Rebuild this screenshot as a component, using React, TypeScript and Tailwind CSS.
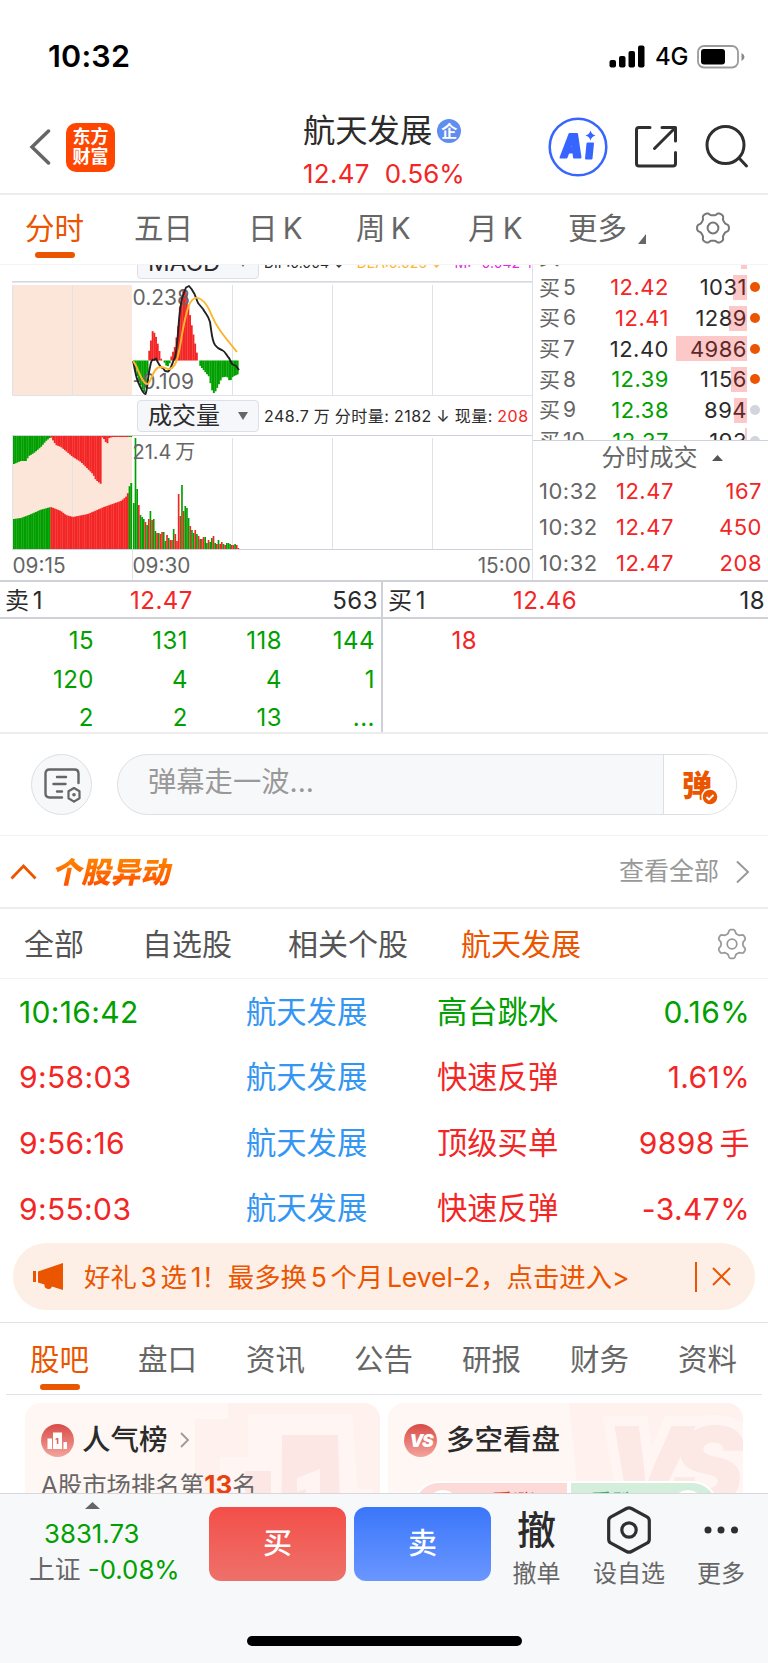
import type { ReactNode } from "react";

const RED = "#f32525";
const GREEN = "#00a000";

const bids = [
  { label: "买4", price: "12.43", size: "612", color: "text-[#f32525]", bar: 6, dot: "bg-[#eb5500]" },
  { label: "买5", price: "12.42", size: "1031", color: "text-[#f32525]", bar: 14, dot: "bg-[#eb5500]" },
  { label: "买6", price: "12.41", size: "1289", color: "text-[#f32525]", bar: 18, dot: "bg-[#eb5500]" },
  { label: "买7", price: "12.40", size: "4986", color: "text-[#2b2b2b]", bar: 71, dot: "bg-[#eb5500]" },
  { label: "买8", price: "12.39", size: "1156", color: "text-[#00a000]", bar: 16, dot: "bg-[#eb5500]" },
  { label: "买9", price: "12.38", size: "894", color: "text-[#00a000]", bar: 13, dot: "bg-[#d3d5dc]" },
  { label: "买10", price: "12.37", size: "193", color: "text-[#00a000]", bar: 2, dot: "bg-[#d3d5dc]" },
];

const deals = ["167", "450", "208"];

const sellQueue = [
  ["15", "131", "118", "144"],
  ["120", "4", "4", "1"],
  ["2", "2", "13", "..."],
];

const moves = [
  { time: "10:16:42", type: "高台跳水", value: "0.16%", color: "text-[#00a000]" },
  { time: "9:58:03", type: "快速反弹", value: "1.61%", color: "text-[#f32525]" },
  { time: "9:56:16", type: "顶级买单", value: "9898 手", color: "text-[#f32525]" },
  { time: "9:55:03", type: "快速反弹", value: "-3.47%", color: "text-[#f32525]" },
];

const infoTabs = ["股吧", "盘口", "资讯", "公告", "研报", "财务", "资料"];

// height and direction of each one-minute volume bar
const volume =
  "46g 111g 60g 44r 34g 32g 30g 27r 24g 30r 38g 29r 30g 18g 16r 16g 15r 17r 17g 8g 14r 11g 9r 9r 20g 15r 8r 55r 33r 64g 38r 43g 41g 31g 23r 19g 16g 19r 15g 13r 10g 10r 12r 12g 6g 9r 7g 11g 13r 6g 5r 9g 5r 7r 5g 4r 6g 6g 5g 4r 4r 5g 4r 1r".split(
    " "
  );

// [x, value] knots, sampled in between
const auctionBottom = [[13, 30], [20, 31], [28, 34], [35, 37], [39, 39], [50, 42], [60, 38], [65, 34], [72, 32], [87, 35], [103, 42], [120, 48], [125, 52], [128, 58], [129, 66], [132, 66]];
const auctionTop = [[13, 28], [20, 25], [25, 25], [28, 20], [33, 17], [40, 11], [45, 5], [50, 1], [55, 9], [60, 11], [65, 15], [72, 21], [80, 26], [87, 33], [92, 38], [95, 44], [100, 48], [101, 1], [104, 4], [106, 9], [108, 2], [112, 1], [132, 1]];
const macdBars = [[133, -2], [137, -18], [143, -32], [146, -24], [147.5, 5], [150, 20], [152, 31], [155, 24], [158, 12], [160, 2], [163, -1], [165, -5], [168, -6], [170, 3], [174, 14], [177, 32], [179, 55], [182, 70], [185, 72], [188, 52], [191, 34], [194, 18], [197, 2], [199, -5], [203, -10], [208, -16], [210, -25], [212, -33], [214, -32], [217, -26], [221, -17], [226, -16], [229, -21], [232, -16], [239, -13]];

function sample(points: number[][], x: number) {
  for (let i = 1; i < points.length; i++) {
    const [x0, y0] = points[i - 1];
    const [x1, y1] = points[i];
    if (x <= x1) return y0 + ((y1 - y0) * (x - x0)) / (x1 - x0);
  }
  return points[points.length - 1][1];
}

function steps(from: number, to: number, step: number) {
  const out: number[] = [];
  for (let x = from; x < to; x += step) out.push(x);
  return out;
}

function gearPath(r: number, amp: number, phase: number) {
  let d = "";
  for (let i = 0; i < 120; i++) {
    const t = (i / 120) * Math.PI * 2;
    const wave = Math.tanh(1.8 * Math.cos(6 * (t + phase)));
    const rr = r + amp * wave;
    d += `${i ? "L" : "M"}${(18 + rr * Math.cos(t)).toFixed(2)} ${(18 + rr * Math.sin(t)).toFixed(2)}`;
  }
  return d + "Z";
}

function Gear({ className, amp, phase, r }: { className: string; amp: number; phase: number; r: number }) {
  return (
    <svg viewBox="0 0 36 36" className={className} fill="none" stroke="currentColor" strokeWidth="2" strokeLinejoin="round">
      <path d={gearPath(r, amp, phase)} />
      <circle cx="18" cy="18" r="5.400" />
    </svg>
  );
}

function StatusBar() {
  return (
    <div className="flex h-[100px] items-center justify-between pt-[13px] pr-[23px] pl-[48px] text-black">
      <span className="text-[30.500px] font-semibold tracking-[0.200px]">10:32</span>
      <div className="flex items-center">
        <svg className="h-[23px] w-[37px]" viewBox="0 0 37 23">
          <rect x="0.500" y="15" width="6.500" height="7.500" rx="2" />
          <rect x="10" y="11" width="6.500" height="11.500" rx="2" />
          <rect x="19.500" y="6" width="6.500" height="16.500" rx="2" />
          <rect x="29" y="0.500" width="6.500" height="22" rx="2" />
        </svg>
        <span className="ml-[9px] w-[42px] pt-px text-[24px] font-medium tracking-[-0.300px]">4G</span>
        <svg className="h-6 w-[48px]" viewBox="0 0 48 24">
          <rect x="1" y="1" width="40" height="21.500" rx="6" fill="none" stroke="#9b9b9b" strokeWidth="1.800" />
          <rect x="4" y="4" width="24" height="15.500" rx="3" />
          <path d="M44.500 8v8q3-1.500 3-4t-3-4z" fill="#8a8a8a" />
        </svg>
      </div>
    </div>
  );
}

function Header() {
  return (
    <header className="flex h-[95px] border-b-2 border-[#ececec] pt-[12px]">
      <div className="flex w-[303px] items-center pb-[11px] pl-[29px]">
        <svg className="h-9 w-[22px] text-[#666]" viewBox="0 0 22 36" fill="none" stroke="currentColor" strokeWidth="3.500" strokeLinecap="round">
          <path d="M19.500 2 3 18l16.500 16" />
        </svg>
        <div className="ml-[15px] flex size-[49px] flex-col items-center justify-center rounded-[10px] bg-[#ff4600] text-[18px] leading-[20px] font-bold text-white">
          <span>东方</span>
          <span>财富</span>
        </div>
      </div>
      <div className="flex w-[244px] flex-col">
        <div className="flex h-[38px] items-center text-[32.300px] text-[#2b2b2b]">
          <span className="whitespace-nowrap">航天发展</span>
          <span className="ml-[5px] flex size-6 items-center justify-center rounded-full bg-[#5f8df0] text-[16px] font-bold text-white">企</span>
        </div>
        <div className="flex h-[35px] items-center gap-[15px] pt-[12px] text-[25.900px] text-[#f32525]">
          <span className="tracking-[0.300px]">12.47</span>
          <span>0.56%</span>
        </div>
      </div>
      <div className="flex items-center pb-[11px]">
        <svg className="size-[62px] text-[#3665ff]" viewBox="0 0 62 62" fill="currentColor" stroke="currentColor">
          <circle cx="31" cy="31" r="28.300" fill="none" strokeWidth="2.500" />
          <path fillRule="evenodd" strokeWidth="2" strokeLinejoin="round" d="M22.500 18h7.500l3.500 23.500h-6.500l-.500-5h-5L19.500 41.500h-6zM25.500 25l-2.700 6.500h3.300z" />
          <path strokeWidth="2" strokeLinejoin="round" d="M40.500 27.500h5.500l-1.500 15h-5.500z" />
          <path stroke="none" d="M43.500 14.500q1 4 5 5-4 1-5 5-1-4-5-5 4-1 5-5z" />
        </svg>
        <svg className="ml-[25px] size-[44px] text-[#2f2f2f]" viewBox="0 0 44 44" fill="none" stroke="currentColor" strokeWidth="3" strokeLinecap="round" strokeLinejoin="round">
          <path d="M16 2.500H5q-2.500 0-2.500 2.500v33.500q0 2.500 2.500 2.500h34q2.500 0 2.500-2.500V27.500" />
          <path d="M28 2.500h13.500V16M41 3 20.500 23.500" />
        </svg>
        <svg className="ml-[26px] size-[46px] text-[#2f2f2f]" viewBox="0 0 46 46" fill="none" stroke="currentColor" strokeWidth="3" strokeLinecap="round">
          <circle cx="21.500" cy="21" r="18.500" />
          <path d="m35 34 7.500 8" />
        </svg>
      </div>
    </header>
  );
}

function PeriodTabs() {
  return (
    <nav className="flex h-[70px] shrink-0 border-b border-[#f3f3f3] pt-[13px] text-[29.500px] leading-[40px] whitespace-nowrap text-[#666] [word-spacing:-3px]">
      <div className="ml-[25px] flex w-[109px] flex-col text-[#eb5500]">
        分时
        <span className="mt-1 ml-[10px] h-[6px] w-10 rounded-full bg-[#eb5500]" />
      </div>
      <span className="w-[114px]">五日</span>
      <span className="w-[108px]">日 K</span>
      <span className="w-[112px]">周 K</span>
      <span className="w-[100px]">月 K</span>
      <span className="w-[59px]">更多</span>
      <svg className="mt-[26px] ml-[10px] size-[10px]" viewBox="0 0 10 10" fill="#666">
        <path d="M9 0v10H1z" />
      </svg>
      <Gear className="mt-[2px] ml-[48px] size-9 text-[#777]" r={14.300} amp={1.700} phase={0} />
    </nav>
  );
}

function Picker({ children }: { children: ReactNode }) {
  return (
    <div className="ml-[137px] flex h-8 w-[122px] shrink-0 items-center justify-between rounded-[4px] border border-[#dcdfe6] bg-[#f6f7fa] pr-[10px] pl-[10px] text-[24px] text-[#2b2b2b]">
      <span>{children}</span>
      <svg className="h-2 w-[10px]" viewBox="0 0 10 8" fill="#666">
        <path d="M0 0h10L5 8z" />
      </svg>
    </div>
  );
}

function Charts() {
  return (
    <div className="flex w-[532px] shrink-0 flex-col overflow-hidden">
      <div className="flex h-[14px] shrink-0 items-end overflow-hidden whitespace-nowrap">
        <Picker>MACD</Picker>
        <div className="ml-[5px] flex h-[33px] items-center gap-[12px] text-[14px]">
          <span className="text-[#2b2b2b]">DIF:0.004 ↓</span>
          <span className="text-[#fdb52c]">DEA:0.025 ↓</span>
          <span className="text-[#e02be0]">M: -0.042 ↑</span>
        </div>
      </div>
      <svg className="h-[118px] w-[533px] shrink-0" viewBox="0 279 533 118">
        <rect x="12" y="281" width="521" height="1.600" fill="#d5d8df" />
        <rect x="13" y="285" width="119" height="110" fill="#fce6da" />
        <path d="M12.500 285V395.500H533M72.500 285v110M232.500 285v110M332.500 285v110M432.500 285v110" fill="none" stroke="#dfe2ea" />
        {steps(133, 238, 1.7).map((x) => {
          const v = sample(macdBars, x);
          return <rect key={x} x={x} y={v > 0 ? 360.5 - v : 360.5} width="1.900" height={Math.abs(v)} fill={v > 0 ? RED : GREEN} />;
        })}
        <text x="132.500" y="304.500" fontSize="21" fill="#666">0.238</text>
        <text x="132.500" y="388.500" fontSize="21" fill="#666">-0.109</text>
        <path d="M133 361c2 8 3 18 6 23 2 4 4 10 6.500 10 2-4 2-16 4.500-27 1-6 2-8 4-7l2-1.500 2 4c2 3 3 6 5 5.500l2 3 3 .5c3-1 4-9 7-14 4-18 3-49 8-62l3-8 3-1.500 2.500 3 3 5 3.500 9 5 6c4 7 5 6 7 13 2 13 2 19 5 23 3 4 4 4 7 5 4 2 4 5 7 8l3 6 4 2 3 4" fill="none" stroke="#222" strokeWidth="1.900" strokeLinejoin="round" />
        <path d="M133 361c5 5 8 22 14 23 4 1 5-16 13-17 6 0 7 3 10 2 8-3 9-18 13-40 4-20 6-28 12-31 7-1 13 8 17 18 5 12 12 20 25 36" fill="none" stroke="#fdb52c" strokeWidth="1.900" />
      </svg>
      <div className="flex h-[37px] shrink-0 items-center whitespace-nowrap">
        <Picker>成交量</Picker>
        <div className="ml-[5px] pt-px text-[16px] tracking-[0.500px] text-[#2b2b2b] [word-spacing:-0.500px]">
          248.7 万 分时量: 2182 ↓ 现量: <span className="text-[#f32525]">208</span>
        </div>
      </div>
      <svg className="h-[146px] w-[533px] shrink-0" viewBox="0 434 533 146">
        <rect x="13" y="437" width="119" height="112" fill="#fce6da" />
        <path d="M72.500 438v111M232.500 438v111M332.500 438v111M432.500 438v111M132.500 549v31M12.500 435v114" stroke="#dfe2ea" />
        {steps(13, 130.5, 1.7).map((x) => {
          const low = sample(auctionBottom, x);
          const high = sample(auctionTop, x);
          return (
            <g key={x} fill={x < 49.5 || x > 128.5 ? GREEN : RED}>
              <rect x={x} y={549 - low} width="1.900" height={low} />
              <rect x={x} y="436" width="1.900" height={high} />
            </g>
          );
        })}
        <path d="M12 435.500h521M12 549.500h521" stroke="#cfd2da" />
        {volume.map((v, i) => {
          const h = parseInt(v);
          return <rect key={i} x={133 + i * 1.66} y={549 - h} width="1.660" height={h} fill={v.endsWith("g") ? GREEN : RED} />;
        })}
        <g fontSize="20.800" fill="#666">
          <text x="132.500" y="458.500" fontSize="20" wordSpacing="-2">21.4 万</text>
          <text x="12.500" y="573">09:15</text>
          <text x="132.500" y="573">09:30</text>
          <text x="531" y="573" textAnchor="end">15:00</text>
        </g>
      </svg>
    </div>
  );
}

function OrderBook() {
  return (
    <div className="flex flex-1 flex-col overflow-hidden border-l border-[#dfe2ea] text-[22px] tracking-[0.500px] text-[#666]">
      <div className="flex h-[176px] shrink-0 flex-col justify-end overflow-hidden border-b border-[#cfd2da]">
        <div className="-mb-4 flex flex-col">
          {bids.map((b) => (
            <div key={b.label} className="relative flex h-[30.700px] shrink-0 items-center pl-[6px] whitespace-nowrap">
              <span className="w-[50px] text-[21px] tracking-normal [word-spacing:-3px]">{b.label.replace("买", "买 ")}</span>
              <span className={`w-[80px] text-right ${b.color}`}>{b.price}</span>
              <span className="w-[78px] text-right text-[#2b2b2b]">{b.size}</span>
              <span className={`ml-[3px] size-[10px] rounded-full ${b.dot}`} />
              <span className="absolute top-[3px] right-[21px] h-[25px] bg-[#f32525]/25" style={{ width: b.bar }} />
            </div>
          ))}
        </div>
      </div>
      <div className="flex h-8 shrink-0 items-center justify-center gap-[14px] pt-px pl-[23px] text-[24px] tracking-normal">
        分时成交
        <svg className="h-[6px] w-[11px]" viewBox="0 0 11 6" fill="#555">
          <path d="M0 6h11L5.500 0z" />
        </svg>
      </div>
      {deals.map((d) => (
        <div key={d} className="flex h-9 shrink-0 items-center pr-[6px] pl-[6px]">
          <span className="w-[77px]">10:32</span>
          <span className="text-[#f32525]">12.47</span>
          <span className="ml-auto text-[#f32525]">{d}</span>
        </div>
      ))}
    </div>
  );
}

function Level({ label, price, size }: { label: string; price: string; size: string }) {
  return (
    <div className="flex h-[37px] items-center border-b-2 border-[#d0d0d8] pt-[3px] pr-[3px] pl-[5px] text-[24px] tracking-[0.500px] whitespace-nowrap text-[#2b2b2b]">
      <span className="w-[125px] tracking-normal [word-spacing:-3px]">{label}</span>
      <span className="text-[#f32525]">{price}</span>
      <span className="ml-auto">{size}</span>
    </div>
  );
}

function QueueBoard() {
  return (
    <section className="flex h-[154px] shrink-0 border-t-2 border-b-2 border-t-[#d0d0d8] border-b-[#ececec]">
      <div className="w-[383px] border-r-2 border-[#d0d0d8]">
        <Level label="卖 1" price="12.47" size="563" />
        <div className="grid grid-cols-[94px_94px_94px_93px] pt-[3px] text-right text-[24px] leading-[38.500px] tracking-[0.500px] text-[#00a000]">
          {sellQueue.flat().map((n, i) => (
            <span key={i}>{n}</span>
          ))}
        </div>
      </div>
      <div className="flex-1">
        <Level label="买 1" price="12.46" size="18" />
        <div className="w-[94px] pt-[3px] text-right text-[24px] leading-[38.500px] tracking-[0.500px] text-[#f32525]">18</div>
      </div>
    </section>
  );
}

function DanmuBar() {
  return (
    <div className="flex h-[102px] shrink-0 items-center border-b border-[#f2f2f2] pl-[31px]">
      <div className="flex size-[61px] items-center justify-center rounded-full border border-[#dcdfe5] bg-[#f7f8fa] text-[#666]">
        <svg className="size-[38px]" viewBox="0 0 38 38" fill="none" stroke="currentColor" strokeWidth="2.400" strokeLinecap="round">
          <path d="M19 31.500H6.500q-4 0-4-4v-20q0-4 4-4h25q4 0 4 4V17" />
          <path d="M14 11h9M10.500 18h12M14 25.500h5" />
          <path d="m31 22 5.500 3.300v7L31 35.600l-5.500-3.300v-7z" strokeWidth="2.200" strokeLinejoin="round" />
          <circle cx="31" cy="28.800" r="1.800" fill="currentColor" stroke="none" />
        </svg>
      </div>
      <div className="ml-[25px] flex h-[61px] w-[620px] overflow-hidden rounded-full border border-[#dcdfe5] bg-[#f7f8fa]">
        <span className="flex-1 pt-[7px] pl-[30px] text-[28.300px] leading-[40px] text-[#999]">弹幕走一波...</span>
        <div className="flex w-[73px] items-center border-l border-[#dcdfe5] bg-white pl-[18px]">
          <div className="relative text-[30px] leading-[40px] font-black text-[#eb5500]">
            弹
            <svg className="absolute right-[-7px] bottom-[-1px] size-[18px]" viewBox="0 0 18 18">
              <circle cx="9" cy="9" r="8" fill="#eb5500" stroke="#fff" strokeWidth="1.500" />
              <path d="m5.500 9 2.500 2.500 4.500-4.500" fill="none" stroke="#fff" strokeWidth="1.800" />
            </svg>
          </div>
        </div>
      </div>
    </div>
  );
}

function StockMoves() {
  return (
    <section className="shrink-0">
      <div className="flex h-[73px] items-center border-b-2 border-[#ececec] pr-[18px] pl-[10px]">
        <svg className="h-[17px] w-[27px]" viewBox="0 0 27 17" fill="none" stroke="#eb5500" strokeWidth="2.800">
          <path d="M1.500 15.500 13.500 3l12 12.500" />
        </svg>
        <h2 className="ml-[17px] -skew-x-12 bg-linear-to-b from-[#ff8c00] to-[#ff4300] bg-clip-text text-[29.500px] leading-[38px] font-black text-transparent">个股异动</h2>
        <span className="ml-auto text-[25px] text-[#999]">查看全部</span>
        <svg className="ml-4 h-6 w-[15px]" viewBox="0 0 15 24" fill="none" stroke="#999" strokeWidth="2">
          <path d="m2 1.500 11 10.500L2 22.500" />
        </svg>
      </div>
      <div className="flex h-[70px] items-center border-b border-[#f2f2f2] text-[30px] whitespace-nowrap text-[#555]">
        <span className="w-[142px] pl-6">全部</span>
        <span className="w-[146px]">自选股</span>
        <span className="w-[173px]">相关个股</span>
        <span className="w-[255px] text-[#eb5500]">航天发展</span>
        <Gear className="size-8 text-[#999]" r={14.300} amp={2.100} phase={Math.PI / 6} />
      </div>
      <div className="flex flex-col">
        {moves.map((m) => (
          <div key={m.time} className={`flex h-[65.600px] items-center pr-[18px] pl-[19px] text-[30px] whitespace-nowrap [word-spacing:-4px] ${m.color}`}>
            <span className="w-[227px] tracking-[0.350px]">{m.time}</span>
            <span className="w-[191px] text-[30.300px] text-[#3396f3]">航天发展</span>
            <span className="text-[30.300px]">{m.type}</span>
            <span className="ml-auto tracking-[0.400px]">{m.value}</span>
          </div>
        ))}
      </div>
    </section>
  );
}

function PromoBanner() {
  return (
    <div className="mx-[13px] mt-[2px] flex h-[67px] shrink-0 items-center rounded-full bg-[#fdeee6] pr-6 pl-[19px] text-[26.400px] whitespace-nowrap text-[#eb5500]">
      <svg className="h-[29px] w-[33px]" viewBox="0 0 33 29" fill="currentColor">
        <path d="M1 9h3v11H1zM6 9.500 31 1v27l-11-3.500q-1 3-4 2.500-4-.5-3.500-4.500L6 20.500z" />
      </svg>
      <span className="ml-[19px] [word-spacing:-3.700px]">好礼 3 选 1！最多换 5 个月 Level-2，点击进入&gt;</span>
      <span className="ml-auto h-[30px] w-[2px] bg-[#eb5500]" />
      <svg className="ml-[15px] size-[19px]" viewBox="0 0 19 19" fill="none" stroke="currentColor" strokeWidth="2">
        <path d="m1 1 17 17M18 1 1 18" />
      </svg>
    </div>
  );
}

function InfoTabs() {
  return (
    <nav className="mt-[12px] shrink-0 border-t border-[#dfe1e8] px-[6px]">
      <div className="flex h-[72px] border-b border-[#dfe1e8] pt-[16px] pl-[24px] text-[29.500px] leading-[40px] text-[#666]">
        {infoTabs.map((t, i) => (
          <div key={t} className={`w-[108px] shrink-0 ${i === 0 ? "text-[#eb5500]" : ""}`}>
            {t}
            {i === 0 && <div className="mt-[5px] ml-[10px] h-[6px] w-10 rounded-full bg-[#eb5500]" />}
          </div>
        ))}
      </div>
    </nav>
  );
}

function Cards() {
  return (
    <div className="flex flex-1 gap-2 overflow-hidden px-[25px] pt-2 whitespace-nowrap">
      <div className="relative h-[140px] w-[355px] shrink-0 overflow-hidden rounded-2xl bg-[#fff7f4]">
        <svg className="absolute inset-0 h-[140px] w-[355px]" viewBox="0 0 355 140">
          <path d="M203 0h152v140H170V16h33z" fill="#fef1ee" />
          <path d="M223 11h105l4 75h16v54H195V54h28z" fill="#fff6f3" />
          <path d="M257 32h56l3 108h-60zM220 68h26v72h-26z" fill="#fce7e4" />
          <path d="m295 66-23 9v14l9-3v54h14z" fill="#fff4f1" />
        </svg>
        <div className="relative flex items-center pt-[17px] pl-4">
          <svg className="h-[33px] w-[33px]" viewBox="0 0 33 33">
            <defs>
              <linearGradient id="rank" x1="0" y1="0" x2="0" y2="1">
                <stop offset="0" stopColor="#d94b46" />
                <stop offset="1" stopColor="#f3a49d" />
              </linearGradient>
            </defs>
            <circle cx="16.500" cy="16.500" r="16.500" fill="url(#rank)" />
            <path d="M6.500 14.500h4.500V25H6.500zM12 8.500h9V25h-9zM22.500 18H26v7h-3.500z" fill="#fff" />
            <text x="14.300" y="20" fontSize="8" fontWeight="800" fill="#dd5a54">1</text>
          </svg>
          <span className="ml-2 text-[28.500px] leading-[40px] font-medium text-[#2b2b2b]">人气榜</span>
          <svg className="ml-3 h-4 w-[10px]" viewBox="0 0 10 16" fill="none" stroke="#999" strokeWidth="1.800">
            <path d="m1 1 7 7-7 7" />
          </svg>
        </div>
        <div className="relative pt-[5px] pl-4 text-[24.400px] leading-[40px] text-[#666]">
          A股市场排名第<b className="text-[26px] text-[#e8420e]">13</b>名
        </div>
      </div>
      <div className="relative h-[140px] w-[355px] shrink-0 overflow-hidden rounded-2xl bg-[#fff7f4]">
        <svg className="absolute inset-0 h-[140px] w-[355px]" viewBox="0 0 355 140">
          <path d="M181 0h174v140H195z" fill="#fef1ee" />
          <text x="216" y="102" fontSize="108" fontWeight="900" fontStyle="italic" fill="#fce8e5" stroke="#fff6f3" strokeWidth="20" paintOrder="stroke" letterSpacing="-18">VS</text>
        </svg>
        <div className="relative flex items-center pt-[17px] pl-4">
          <svg className="size-[33px]" viewBox="0 0 33 33">
            <circle cx="16.500" cy="16.500" r="16.500" fill="url(#rank)" />
            <text x="5.500" y="23" fontSize="17.500" fontWeight="900" fontStyle="italic" fill="#fff" letterSpacing="-1.500">VS</text>
          </svg>
          <span className="ml-[9px] text-[28.500px] leading-[40px] font-medium text-[#2b2b2b]">多空看盘</span>
        </div>
        <div className="relative mx-[25px] mt-[21px] flex h-[52px] overflow-hidden rounded-full border-2 border-white text-[22px] leading-[36px]">
          <div className="flex w-[155px] bg-[#fddad7] pt-px pl-3 text-[#e8420e]">
            <span className="mt-[6px] size-8 rounded-full bg-white" />
            <span className="ml-[32px]">看涨!</span>
          </div>
          <div className="flex w-[152px] justify-end border-l-4 border-white bg-[#d3efdc] pt-px pr-3 text-[#35b060]">
            <span className="mr-[38px]">看跌</span>
            <span className="mt-[6px] size-8 rounded-full bg-white" />
          </div>
        </div>
      </div>
    </div>
  );
}

function BottomBar() {
  return (
    <footer className="h-[170px] shrink-0 border-t border-[#d6d8dd] bg-[#f7f8fa] text-[24px] whitespace-nowrap text-[#666]">
      <div className="flex h-[142px]">
        <div className="flex w-[209px] flex-col pt-2">
          <svg className="ml-[85px] h-[7px] w-[15px]" viewBox="0 0 15 7" fill="#666">
            <path d="M0 7h15L7.500 0z" />
          </svg>
          <span className="mt-[7px] ml-11 text-[25.800px] leading-[36px] text-[#00a000]">3831.73</span>
          <span className="ml-[29px] text-[25.800px] leading-[36px]">
            上证 <span className="text-[#00a000]">-0.08%</span>
          </span>
        </div>
        <div className="flex gap-2 pt-[13px] text-[29px] font-medium text-white">
          <button className="h-[73.500px] w-[137px] rounded-xl bg-linear-to-b from-[#f34e48] to-[#ee706a]">买</button>
          <button className="h-[73.500px] w-[137px] rounded-xl bg-linear-to-b from-[#3a76fa] to-[#6a96ff]">卖</button>
        </div>
        <div className="flex pt-[12px] text-center">
          <div className="ml-[12px] flex w-[67px] flex-col">
            <span className="h-[51px] text-[39px] leading-[47px] font-medium text-[#2b2b2b]">撤</span>
            <span className="leading-[34px]">撤单</span>
          </div>
          <div className="ml-[12px] flex w-[94px] flex-col items-center">
            <svg className="h-[51px] w-[46px]" viewBox="0 0 46 51" fill="none" stroke="#2f2f2f" strokeWidth="3.200" strokeLinejoin="round">
              <path d="M20.500 2.500q2.500-1.300 5 0l15.500 8.300q2.300 1.300 2.300 4v18.400q0 2.700-2.300 4L25.500 45.500q-2.500 1.300-5 0L5 37.200q-2.300-1.300-2.300-4V14.800q0-2.700 2.300-4z" />
              <circle cx="23" cy="24" r="7.200" />
            </svg>
            <span className="leading-[34px]">设自选</span>
          </div>
          <div className="ml-[8px] flex w-[74px] flex-col items-center">
            <svg className="h-[51px] w-[36px]" viewBox="0 0 36 51" fill="#2f2f2f">
              <circle cx="5" cy="24" r="3.500" />
              <circle cx="18" cy="24" r="3.500" />
              <circle cx="31.500" cy="24" r="3.500" />
            </svg>
            <span className="leading-[34px]">更多</span>
          </div>
        </div>
      </div>
      <div className="mx-auto h-[10px] w-[275px] rounded-full bg-black" />
    </footer>
  );
}

export default function App() {
  return (
    <div className="flex h-[1663px] w-[768px] flex-col overflow-hidden bg-white font-[Inter,'Noto_Sans_CJK_SC',sans-serif] leading-none">
      <StatusBar />
      <Header />
      <PeriodTabs />
      <div className="flex h-[315px] shrink-0 overflow-hidden">
        <Charts />
        <OrderBook />
      </div>
      <QueueBoard />
      <DanmuBar />
      <StockMoves />
      <PromoBanner />
      <InfoTabs />
      <Cards />
      <BottomBar />
    </div>
  );
}
